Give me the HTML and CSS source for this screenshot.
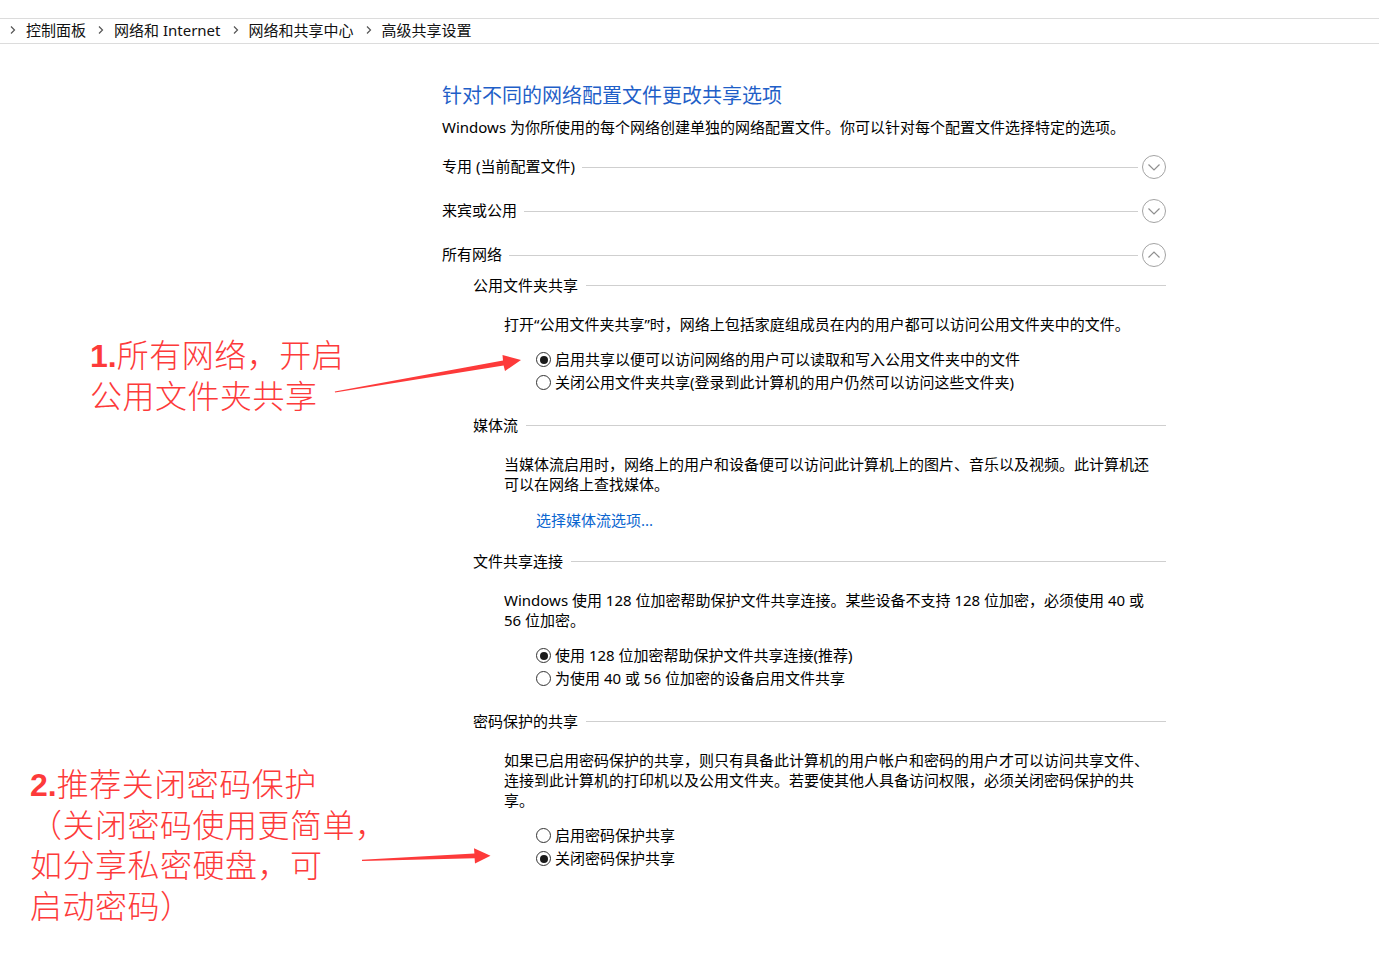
FILE: index.html
```html
<!DOCTYPE html>
<html lang="zh-CN">
<head>
<meta charset="utf-8">
<title>高级共享设置</title>
<link rel="stylesheet" href="styles.css">
</head>
<body>
<div class="page">
  <nav class="crumbs">
    <span class="crumb"><svg class="chev" width="6" height="8" viewBox="0 0 6 8"><polyline points="1,0.5 4.5,4 1,7.5" fill="none" stroke="#555" stroke-width="1.2"/></svg>控制面板</span>
    <span class="crumb"><svg class="chev" width="6" height="8" viewBox="0 0 6 8"><polyline points="1,0.5 4.5,4 1,7.5" fill="none" stroke="#555" stroke-width="1.2"/></svg>网络和 Internet</span>
    <span class="crumb"><svg class="chev" width="6" height="8" viewBox="0 0 6 8"><polyline points="1,0.5 4.5,4 1,7.5" fill="none" stroke="#555" stroke-width="1.2"/></svg>网络和共享中心</span>
    <span class="crumb"><svg class="chev" width="6" height="8" viewBox="0 0 6 8"><polyline points="1,0.5 4.5,4 1,7.5" fill="none" stroke="#555" stroke-width="1.2"/></svg>高级共享设置</span>
  </nav>

  <main class="main">
    <h1 class="title">针对不同的网络配置文件更改共享选项</h1>
    <p class="desc">Windows 为你所使用的每个网络创建单独的网络配置文件。你可以针对每个配置文件选择特定的选项。</p>

    <div class="profile">
      <span class="plabel">专用 (当前配置文件)</span><span class="rule"></span>
      <svg class="toggle" width="24" height="24" viewBox="0 0 24 24"><circle cx="12" cy="12" r="11.5" fill="none" stroke="#a3a3a3"/><polyline points="6.5,9.5 12,15 17.5,9.5" fill="none" stroke="#8f8f8f" stroke-width="1.2"/></svg>
    </div>
    <div class="profile">
      <span class="plabel">来宾或公用</span><span class="rule"></span>
      <svg class="toggle" width="24" height="24" viewBox="0 0 24 24"><circle cx="12" cy="12" r="11.5" fill="none" stroke="#a3a3a3"/><polyline points="6.5,9.5 12,15 17.5,9.5" fill="none" stroke="#8f8f8f" stroke-width="1.2"/></svg>
    </div>
    <div class="profile">
      <span class="plabel">所有网络</span><span class="rule"></span>
      <svg class="toggle" width="24" height="24" viewBox="0 0 24 24"><circle cx="12" cy="12" r="11.5" fill="none" stroke="#a3a3a3"/><polyline points="6.5,14.5 12,9 17.5,14.5" fill="none" stroke="#8f8f8f" stroke-width="1.2"/></svg>
    </div>

    <section class="sub first">
      <div class="shead"><span>公用文件夹共享</span><span class="rule"></span></div>
      <p class="para">打开“公用文件夹共享”时，网络上包括家庭组成员在内的用户都可以访问公用文件夹中的文件。</p>
      <div class="radios">
        <div class="radio"><span class="dot on"></span>启用共享以便可以访问网络的用户可以读取和写入公用文件夹中的文件</div>
        <div class="radio"><span class="dot"></span>关闭公用文件夹共享(登录到此计算机的用户仍然可以访问这些文件夹)</div>
      </div>
    </section>

    <section class="sub">
      <div class="shead"><span>媒体流</span><span class="rule"></span></div>
      <p class="para">当媒体流启用时，网络上的用户和设备便可以访问此计算机上的图片、音乐以及视频。此计算机还<br>可以在网络上查找媒体。</p>
      <a class="link" href="#">选择媒体流选项...</a>
    </section>

    <section class="sub">
      <div class="shead"><span>文件共享连接</span><span class="rule"></span></div>
      <p class="para">Windows 使用 128 位加密帮助保护文件共享连接。某些设备不支持 128 位加密，必须使用 40 或<br>56 位加密。</p>
      <div class="radios">
        <div class="radio"><span class="dot on"></span>使用 128 位加密帮助保护文件共享连接(推荐)</div>
        <div class="radio"><span class="dot"></span>为使用 40 或 56 位加密的设备启用文件共享</div>
      </div>
    </section>

    <section class="sub">
      <div class="shead"><span>密码保护的共享</span><span class="rule"></span></div>
      <p class="para">如果已启用密码保护的共享，则只有具备此计算机的用户帐户和密码的用户才可以访问共享文件、<br>连接到此计算机的打印机以及公用文件夹。若要使其他人具备访问权限，必须关闭密码保护的共<br>享。</p>
      <div class="radios">
        <div class="radio"><span class="dot"></span>启用密码保护共享</div>
        <div class="radio"><span class="dot on"></span>关闭密码保护共享</div>
      </div>
    </section>
  </main>

  <div class="note note1">
    <div class="nline"><span class="num">1.</span>所有网络，开启</div>
    <div class="nline">公用文件夹共享</div>
  </div>
  <div class="note note2">
    <div class="nline"><span class="num">2.</span>推荐关闭密码保护</div>
    <div class="nline">（关闭密码使用更简单，</div>
    <div class="nline">如分享私密硬盘，可</div>
    <div class="nline">启动密码）</div>
  </div>

  <svg class="arrows" width="1379" height="954" viewBox="0 0 1379 954">
    <polygon fill="#fd3a3a" points="335,392.6 503.6,365.6 505,371 521,360 502.5,355 503,360.6 334.8,391.4"/>
    <polygon fill="#fd3a3a" points="362,861 474.6,858.3 475,863.5 490.5,855.8 474,848.3 474.4,853.4 362,859.8"/>
  </svg>
</div>
</body>
</html>
```

FILE: styles.css
```css
* { box-sizing: border-box; }

html, body {
  margin: 0;
  padding: 0;
  background: #ffffff;
}

body {
  font-family: "Segoe UI", "Noto Sans", "Noto Sans CJK SC", sans-serif;
  font-size: 15px;
  color: #000;
}

.page {
  position: relative;
  width: 1379px;
  height: 954px;
  overflow: hidden;
}

/* breadcrumb bar */
.crumbs {
  margin-top: 18px;
  height: 26px;
  border-top: 1px solid #dcdcdc;
  border-bottom: 1px solid #dcdcdc;
  display: flex;
  align-items: center;
  padding-left: 10px;
  padding-bottom: 2px;
  gap: 12px;
  font-size: 15px;
  line-height: 20px;
  color: #111;
}

.crumb {
  display: flex;
  align-items: center;
  white-space: nowrap;
}

.chev {
  margin-right: 10px;
  flex: none;
}

/* main column */
.main {
  margin-left: 442px;
  width: 724px;
}

.title {
  margin: 38px 0 0 0;
  font-size: 20px;
  line-height: 28px;
  font-weight: normal;
  color: #1f5fc8;
  white-space: nowrap;
}

.desc {
  margin: 7px 0 0 0;
  line-height: 20px;
  white-space: nowrap;
}

.profile {
  display: flex;
  align-items: center;
  height: 24px;
  margin-top: 20px;
}

.profile:first-of-type {
  margin-top: 18px;
}

.plabel {
  white-space: nowrap;
  line-height: 20px;
  position: relative;
  top: -1px;
}

.rule {
  flex: 1;
  height: 1px;
  background: #cfcfcf;
  margin-left: 7px;
}

.toggle {
  flex: none;
  margin-left: 4px;
}

.sub {
  padding-left: 31px;
  margin-top: 21px;
}

.sub.first {
  margin-top: 8px;
}

.shead {
  display: flex;
  align-items: center;
  height: 20px;
  line-height: 20px;
  white-space: nowrap;
}

.shead .rule {
  margin-left: 8px;
}

.para {
  margin: 19px 0 0 31px;
  line-height: 20px;
  white-space: nowrap;
}

.radios {
  margin: 14px 0 0 63px;
}

.radio {
  display: flex;
  align-items: center;
  height: 23px;
  line-height: 23px;
  white-space: nowrap;
}

.dot {
  flex: none;
  width: 15px;
  height: 15px;
  border: 1px solid #333;
  border-radius: 50%;
  margin-right: 4px;
  background: #fff;
  display: flex;
  align-items: center;
  justify-content: center;
}

.dot.on::after {
  content: "";
  width: 8px;
  height: 8px;
  border-radius: 50%;
  background: #1a1a1a;
}

.link {
  display: block;
  margin: 16px 0 0 63px;
  line-height: 20px;
  color: #0b66d0;
  text-decoration: none;
  font-size: 15px;
}

/* annotations */
.note {
  position: absolute;
  font-family: "Noto Sans CJK SC", sans-serif;
  font-weight: 300;
  font-size: 32px;
  letter-spacing: 0.5px;
  color: #fd3a3a;
  white-space: nowrap;
}

.nline {
  height: 40.5px;
  line-height: 40.5px;
}

.note .num {
  font-family: "Liberation Sans", Arial, sans-serif;
  font-weight: bold;
  letter-spacing: 0;
}

.note1 {
  left: 90px;
  top: 333px;
}

.note2 {
  left: 30px;
  top: 762px;
}

.arrows {
  position: absolute;
  left: 0;
  top: 0;
  pointer-events: none;
}
```
